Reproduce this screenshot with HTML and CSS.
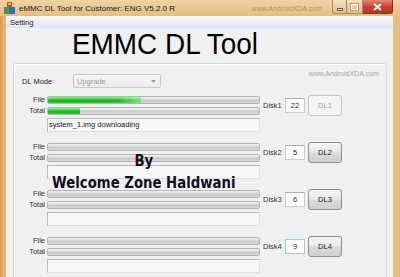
FILE: index.html
```html
<!DOCTYPE html>
<html>
	<head>
		<meta charset="UTF-8">
		<title>eMMC DL Tool</title>
		<link rel="stylesheet" href="styles.css">
	</head>
	<body>
		<div class="window">
			<div class="titlebar">
				<svg class="app-icon" width="11" height="12" viewBox="0 0 11 12">
					<rect x="3" y="0" width="5" height="5" fill="#d9452b"/>
					<rect x="4" y="1" width="3" height="2" fill="#f2c53d"/>
					<rect x="0" y="5" width="5" height="7" fill="#3aa33a"/>
					<rect x="5" y="5" width="6" height="7" fill="#2f6fd0"/>
				</svg>
				<span class="caption">eMMC DL Tool for Customer: ENG V5.2.0 R</span>
				<span class="brand brand-top">www.AndroidXDA.com</span>
				<div class="controls">
					<span class="ctl ctl-min"><i></i></span>
					<span class="ctl ctl-max"><i></i></span>
					<span class="ctl ctl-close">
						<svg width="9" height="8" viewBox="0 0 9 8"><path d="M1 1 L8 7 M8 1 L1 7" stroke="#fff" stroke-width="2"/></svg>
					</span>
				</div>
			</div>

			<div class="client">
				<div class="menubar"><span>Setting</span></div>

				<h1 class="headline">EMMC DL Tool</h1>

				<div class="group">
					<div class="mode-row">
						<span class="mode-label">DL Mode</span>
						<div class="combo">
							<span>Upgrade</span>
							<svg width="5" height="3" viewBox="0 0 5 3"><path d="M0 0 H5 L2.5 3 Z" fill="#9a9a9a"/></svg>
						</div>
						<span class="brand">www.AndroidXDA.com</span>
					</div>

					<div class="slot">
						<span class="lbl">File</span>
						<div class="bar"><div class="fill glow" style="width:44%"></div></div>
						<span class="disk">Disk1</span>
						<div class="num">22</div>
						<button class="dl" disabled>DL1</button>
						<span class="lbl">Total</span>
						<div class="bar"><div class="fill" style="width:15%"></div></div>
						<span></span>
						<div class="status">system_1.img downloading</div>
					</div>

					<div class="slot">
						<span class="lbl">File</span>
						<div class="bar"></div>
						<span class="disk">Disk2</span>
						<div class="num">5</div>
						<button class="dl">DL2</button>
						<span class="lbl">Total</span>
						<div class="bar"></div>
						<span></span>
						<div class="status"></div>
					</div>

					<div class="slot">
						<span class="lbl">File</span>
						<div class="bar"></div>
						<span class="disk">Disk3</span>
						<div class="num">6</div>
						<button class="dl">DL3</button>
						<span class="lbl">Total</span>
						<div class="bar"></div>
						<span></span>
						<div class="status"></div>
					</div>

					<div class="slot">
						<span class="lbl">File</span>
						<div class="bar"></div>
						<span class="disk">Disk4</span>
						<div class="num focus">9</div>
						<button class="dl">DL4</button>
						<span class="lbl">Total</span>
						<div class="bar"></div>
						<span></span>
						<div class="status"></div>
					</div>

					<div class="credit">
						<span>By</span>
						<span>Welcome Zone Haldwani</span>
					</div>
				</div>
			</div>
		</div>
	</body>
</html>
```

FILE: styles.css
```css
* {
	box-sizing: border-box;
}

html, body {
	margin: 0;
}

body {
	width: 400px;
	height: 277px;
	overflow: hidden;
	font-family: "Liberation Sans", Arial, sans-serif;
	font-size: 7.5px;
	color: #1e1e1e;
	background: #e3b472;
}

.window {
	height: 277px;
	display: flex;
	flex-direction: column;
	background: linear-gradient(90deg, #d59d55 0, #e4b97b 5px, #eacb98 45%, #e6bd80 100%);
}

/* title bar */
.titlebar {
	height: 16px;
	flex: none;
	display: flex;
	align-items: center;
	background: linear-gradient(#eed3a6, #e4bd82);
}

.app-icon {
	margin: 0 4px 0 4px;
}

.caption {
	font-size: 8px;
	color: #1a1a1a;
}

.brand {
	font-size: 7px;
	color: #a7a7a7;
}

.brand-top {
	margin-left: auto;
	margin-right: 10px;
	color: rgba(150, 110, 70, .65);
}

.controls {
	display: flex;
	align-self: flex-start;
	margin-right: 7px;
}

.ctl {
	height: 14px;
	display: flex;
	align-items: center;
	justify-content: center;
	border: 1px solid #b18a5a;
	border-top: none;
	background: linear-gradient(#f3dfbf, #e2bd88);
}

.ctl-min {
	width: 15px;
	border-radius: 0 0 0 3px;
}

.ctl-min i {
	width: 6px;
	height: 3px;
	margin-top: 5px;
	background: #fff;
	border: 1px solid #6b5a44;
}

.ctl-max {
	width: 16px;
	border-left: none;
}

.ctl-max i {
	width: 7px;
	height: 6px;
	border: 1px solid #fff;
	outline: 1px solid #b69a76;
}

.ctl-close {
	width: 30px;
	border-left: none;
	border-color: #8b3124;
	border-radius: 0 0 3px 0;
	background: linear-gradient(#e4887a, #c74633 50%, #b53422);
}

/* client area */
.client {
	flex: 1;
	margin: 0 7px 0 6px;
	background: #f0f0f0;
	display: flex;
	flex-direction: column;
}

.menubar {
	height: 12px;
	flex: none;
	display: flex;
	align-items: center;
	padding-left: 4px;
	border-top: 1px solid #f7f9fc;
	background: linear-gradient(#f4f6fb, #dfe5ef);
}

.headline {
	margin: 1px 0 0 66px;
	height: 30px;
	font-size: 30px;
	line-height: 30px;
	font-weight: normal;
	color: #000;
	white-space: nowrap;
	transform: scaleX(.93);
	transform-origin: left top;
}

.group {
	position: relative;
	flex: 1;
	margin: 4px 6px 0 7px;
	padding-top: 10px;
	border: 1px solid #d5dbe0;
	border-bottom: none;
	border-radius: 3px 3px 0 0;
	box-shadow: inset 1px 1px 0 #fff;
}

.mode-row {
	height: 14px;
	display: flex;
	align-items: center;
	margin-bottom: 8px;
}

.mode-label {
	width: 51px;
	margin-left: 8px;
}

.combo {
	width: 88px;
	height: 14px;
	display: flex;
	align-items: center;
	justify-content: space-between;
	padding: 0 4px 0 3px;
	color: #9c9c9c;
	border: 1px solid #c9c9c9;
	border-radius: 2px;
	background: linear-gradient(#f6f6f6, #ececec);
}

.mode-row .brand {
	align-self: flex-start;
	margin: -4px 7px 0 auto;
}

/* one disk slot */
.slot {
	display: grid;
	grid-template-columns: 33px 216px 22px 23px 34px;
	grid-template-rows: 8px 8px 14px;
	row-gap: 3px;
	margin-bottom: 11px;
	align-items: center;
}

.lbl {
	text-align: right;
	padding-right: 2px;
	line-height: 8px;
	color: #333;
}

.bar {
	width: 213px;
	height: 8px;
	border: 1px solid #b5b5b5;
	border-radius: 2px;
	overflow: hidden;
	background: linear-gradient(#f2f2f2 0, #dedede 35%, #c9c9c9 60%, #dcdcdc 100%);
}

.fill {
	height: 100%;
	background: linear-gradient(#9eef9e 0, #36d636 35%, #14b414 65%, #38cc38 100%);
}

.fill.glow {
	background:
		linear-gradient(90deg, rgba(255, 255, 255, 0) 75%, rgba(200, 255, 200, .55) 100%),
		linear-gradient(#9eef9e 0, #36d636 35%, #14b414 65%, #38cc38 100%);
}

.status {
	grid-column: 2;
	width: 213px;
	height: 14px;
	padding-left: 1px;
	line-height: 12px;
	color: #222;
	border: 1px solid #e0e0e0;
	border-top-color: #b9b9b9;
	border-left-color: #b9b9b9;
	background: #f7f7f7;
}

.disk,
.num,
.dl {
	grid-row: 1 / 3;
}

.disk {
	grid-column: 3;
	color: #333;
}

.num {
	grid-column: 4;
	width: 20px;
	height: 15px;
	display: flex;
	align-items: center;
	justify-content: center;
	background: #fff;
	border: 1px solid #c9ccd1;
	border-top-color: #abadb3;
}

.num.focus {
	border-color: #a9c6e3;
}

.dl {
	grid-column: 5;
	width: 34px;
	height: 21px;
	padding: 0;
	font-family: inherit;
	font-size: 7.5px;
	color: #222;
	border: 1px solid #8e8f8f;
	border-radius: 3px;
	background: linear-gradient(#f4f4f4 0, #e8e8e8 48%, #d9d9d9 52%, #cfcfcf 100%);
}

.dl:disabled {
	color: #a3a3a3;
	border-color: #c3c6c9;
	background: #f4f4f4;
}

/* text stamped over the panel */
.credit {
	position: absolute;
	left: 36px;
	top: 86px;
	width: 226px;
	display: flex;
	flex-direction: column;
	align-items: center;
	font-family: "DejaVu Sans", sans-serif;
	font-size: 16px;
	font-weight: bold;
	line-height: 22px;
	color: #101020;
	transform: scaleX(.83);
	transform-origin: left top;
}
```
